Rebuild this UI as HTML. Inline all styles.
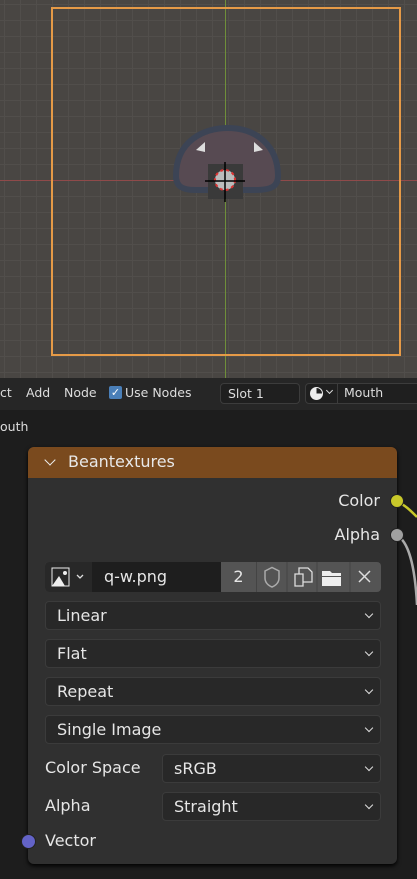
<!DOCTYPE html><html><head><style>
*{margin:0;padding:0;box-sizing:border-box}
body{width:417px;height:879px;overflow:hidden;background:#1d1d1d;font-family:"DejaVu Sans","Liberation Sans",sans-serif;color:#e0e0e0;position:relative;font-size:15px}
.vp{position:absolute;left:0;top:0;width:417px;height:378px;background-color:#494643;
background-image:linear-gradient(#514e4b 1px,transparent 1px),linear-gradient(90deg,#514e4b 1px,transparent 1px);background-size:16px 16px;background-position:4px 4px}
.a{position:absolute}
.dd{position:absolute;left:45px;width:336px;height:29px;background:#282828;border:1px solid #3b3b3b;border-radius:4px;padding-left:11px;line-height:28px;font-size:16px;color:#e6e6e6}
.dd:after{content:"";position:absolute;right:8px;top:9px;width:5px;height:5px;border-right:1.5px solid #ddd;border-bottom:1.5px solid #ddd;transform:rotate(45deg)}
.lbl{position:absolute;font-size:16px;color:#e6e6e6}
.t{position:absolute;font-size:12.5px;color:#ddd}
</style></head><body>
<div class="vp"></div>
<div class="a" style="left:225px;top:0;width:1px;height:378px;background:#6f8f3a"></div>
<div class="a" style="left:0;top:180px;width:417px;height:1px;background:#8f4a4a"></div>
<div class="a" style="left:51px;top:7px;width:350px;height:349px;border:2px solid #e59a47"></div>
<svg class="a" style="left:150px;top:110px" width="140" height="100">
<path d="M26 66 C26 30 55 18 78 18 C105 18 128 35 128 66 C128 76 122 80 105 80 L45 80 C32 80 26 76 26 66Z" fill="#574a52" stroke="#3c4455" stroke-width="6"/>
<path d="M46 40 l9 -8 v10z M104 32 l9 8 -9 2z" fill="#ddd"/>
<rect x="58" y="54" width="35" height="35" fill="#3a3a3a"/>
<circle cx="75" cy="70" r="10" fill="#bbb" stroke="#d33" stroke-width="2" stroke-dasharray="3 3"/>
<path d="M55 71h40M75 52v40" stroke="#000" stroke-width="1.5"/>
</svg>
<div class="a" style="left:0;top:378px;width:417px;height:32px;background:#262626"></div>
<div class="t" style="top:385px;left:0">ct</div>
<div class="t" style="top:385px;left:26px">Add</div>
<div class="t" style="top:385px;left:64px">Node</div>
<div class="a" style="top:386px;left:109px;width:13px;height:13px;background:#4a7fb8;border-radius:2px;color:#fff;font-size:11px;line-height:13px;text-align:center">✓</div>
<div class="t" style="top:385px;left:125px">Use Nodes</div>
<div class="a" style="top:383px;left:220px;width:80px;height:21px;border:1px solid #3c3c3c;border-radius:4px;background:#1f1f1f;font-size:12.5px;line-height:19px;padding-left:7px;color:#ddd">Slot 1</div>
<div class="a" style="top:383px;left:305px;width:120px;height:21px;border:1px solid #3c3c3c;border-radius:4px;background:#1f1f1f"></div>
<div class="a" style="top:387px;left:310px;width:13px;height:13px;border-radius:50%;background:conic-gradient(#222 0 25%,#eee 25% 100%);border:1px solid #eee"></div>
<div class="a" style="top:388px;left:327px;width:5px;height:5px;border-right:1.3px solid #ddd;border-bottom:1.3px solid #ddd;transform:rotate(45deg)"></div>
<div class="a" style="top:383px;left:337px;width:1px;height:21px;background:#3c3c3c"></div>
<div class="t" style="top:385px;left:344px">Mouth</div>
<div class="t" style="top:419px;left:0">outh</div>
<svg class="a" style="left:390px;top:495px" width="27" height="120"><path d="M6 6 C15 10 20 15 27 22" stroke="#c8c82a" stroke-width="2.5" fill="none"/><path d="M6 40 C18 45 25 70 27 110" stroke="#aaa" stroke-width="2.5" fill="none"/></svg>
<div class="a" style="left:28px;top:447px;width:369px;height:417px;background:#303030;border-radius:6px;overflow:hidden;box-shadow:0 2px 4px #000">
<div style="height:31px;background:#7a4a1e;font-size:16px;line-height:30px;padding-left:40px;color:#e8e8e8">Beantextures</div>
</div>
<div class="a" style="left:46px;top:456px;width:8px;height:8px;border-right:1.5px solid #eee;border-bottom:1.5px solid #eee;transform:rotate(45deg)"></div>
<div class="lbl" style="right:37px;top:491px">Color</div>
<div class="lbl" style="right:37px;top:525px">Alpha</div>
<div class="a" style="left:390px;top:494px;width:14px;height:14px;border-radius:50%;background:#c8c82a;border:1.5px solid #222"></div>
<div class="a" style="left:390px;top:528px;width:14px;height:14px;border-radius:50%;background:#a0a0a0;border:1.5px solid #222"></div>
<div class="a" style="left:45px;top:562px;width:336px;height:30px;background:#545454;border-radius:4px;overflow:hidden">
<div class="a" style="left:0;top:0;width:47px;height:30px;background:#282828"></div>
<svg class="a" style="left:6px;top:5px" width="38" height="20"><path d="M1 1h17v18h-17z" stroke="#eee" fill="none"/><path d="M1 19l7-10 6 10z" fill="#eee"/><circle cx="14" cy="6" r="2" fill="#eee"/><path d="M26 8l3 3 3-3" stroke="#ddd" fill="none" stroke-width="1.3"/></svg>
<div class="a" style="left:47px;top:0;width:129px;height:30px;background:#1e1e1e;color:#e6e6e6;font-size:16px;line-height:30px;padding-left:12px">q-w.png</div>
<div class="a" style="left:176px;top:0;width:36px;height:30px;color:#e6e6e6;font-size:16px;line-height:30px;text-align:center;border-right:1px solid #444">2</div>
<svg class="a" style="left:212px;top:0" width="124" height="30"><path d="M8 9 L15 5.5 L22 9 V16 Q22 22 15 25 Q8 22 8 16Z" stroke="#aaa" fill="none" stroke-width="1.5"/><path d="M30 0v30M60 0v30M93 0v30" stroke="#444"/><path d="M38 12h8v12h-8z M42 12v-6h9l4 4v10h-9" stroke="#ddd" fill="none" stroke-width="1.3"/><path d="M65 9h8l2 2h9v3h-19z M65 15h19v9h-19z" fill="#eee"/><path d="M102 9l11 11M113 9l-11 11" stroke="#ddd" stroke-width="1.5"/></svg>
</div>
<div class="dd" style="top:601px">Linear</div>
<div class="dd" style="top:639px">Flat</div>
<div class="dd" style="top:677px">Repeat</div>
<div class="dd" style="top:715px">Single Image</div>
<div class="lbl" style="left:45px;top:758px">Color Space</div>
<div class="dd" style="top:754px;left:162px;width:219px">sRGB</div>
<div class="lbl" style="left:45px;top:796px">Alpha</div>
<div class="dd" style="top:792px;left:162px;width:219px">Straight</div>
<div class="a" style="left:21px;top:834px;width:15px;height:15px;border-radius:50%;background:#6363c7;border:1.5px solid #222"></div>
<div class="lbl" style="left:45px;top:831px">Vector</div>
</body></html>
